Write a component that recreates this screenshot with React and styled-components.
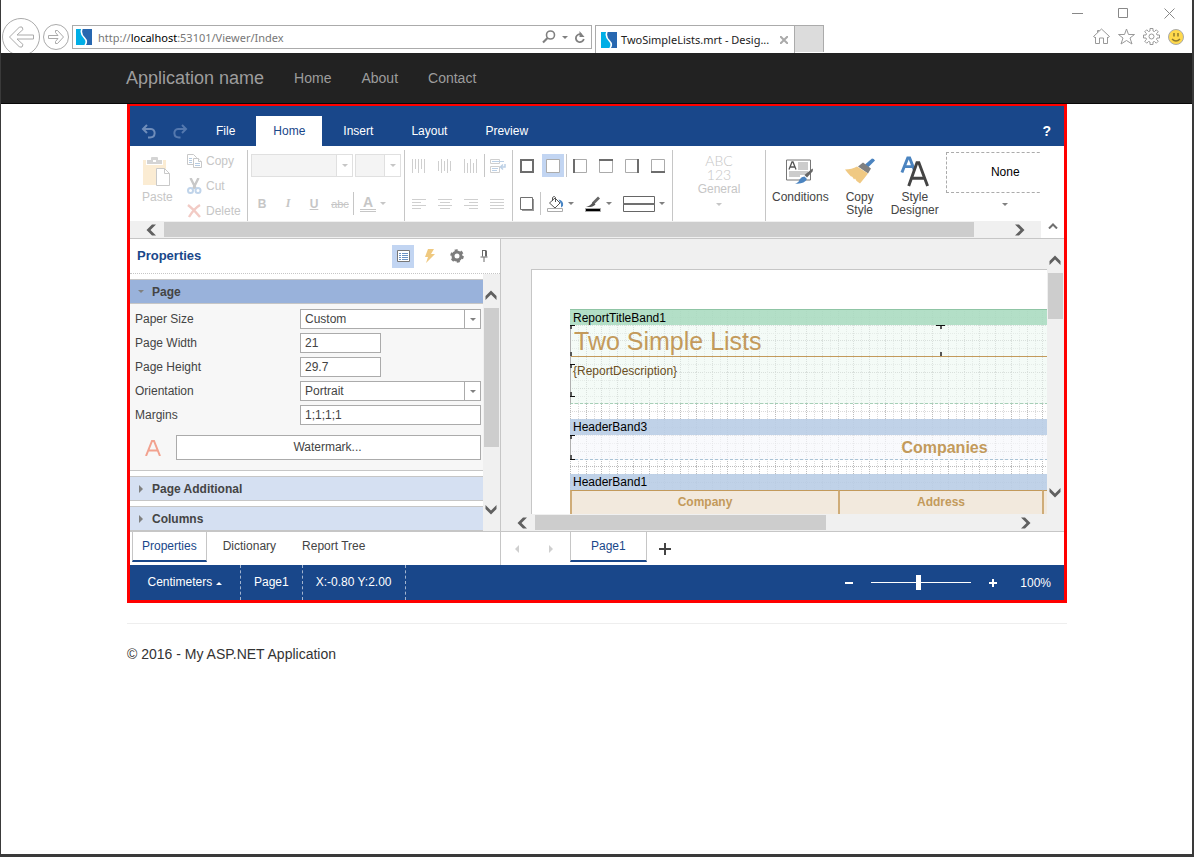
import React, {useState} from 'react';
import styled, {createGlobalStyle, css} from 'styled-components';

const colors = {
    blue: '#19478a',
    blue_selected: '#c2d5f2',
    blue_group: '#d5e0f2',
    blue_group_open: '#99b2db',
    text: '#444444',
    disabled: '#c6c6c6',
    border: '#c6c6c6',
    input_border: '#ababab',
    track: '#f0f0f0',
    thumb: '#cdcdcd',
    gold: '#c39a5b',
};

const GlobalStyle = createGlobalStyle`
    * {
        box-sizing: border-box;
    }

    body {
        margin: 0;
        background: #ffffff;
        font-family: "Liberation Sans", Arial, sans-serif;
        font-size: 12px;
        color: ${colors.text};
    }

    button, input, select {
        font: inherit;
        color: inherit;
    }
`

/* icons */

const Arrow = ({color = '#808080', dir = 'down'}) => {
    const paths = {
        down: 'M0 1h6L3 4z',
        up: 'M0 4h6L3 1z',
        right: 'M1 0v8l4-4z',
        left: 'M5 0v8L1 4z',
    };
    const tall = dir === 'right' || dir === 'left';
    return (
        <svg width="6" height={tall ? 8 : 5} viewBox={tall ? '0 0 6 8' : '0 0 6 5'} fill={color}>
            <path d={paths[dir]} />
        </svg>
    );
};

const Chevron = ({dir}) => {
    const turn = {left: 0, up: 90, right: 180, down: 270}[dir];
    return (
        <svg width="12" height="12" viewBox="0 0 12 12" fill="#606060">
            <path d="M7 0.5h4L5.5 6l5.5 5.5H7L1.5 6z" transform={`rotate(${turn} 6 6)`} />
        </svg>
    );
};

const Favicon = () => (
    <svg width="16" height="16" viewBox="0 0 16 16">
        <path fill="#00aee6" d="M0 0h16v16H0z" />
        <path fill="#2767b0" d="M6 0h10v16H9c2-2 2-4 0-6.500C6 7 5 3 6 0z" />
        <path fill="none" stroke="#fff" strokeWidth="1.600" d="M6 0C4 4 6 6.500 8.500 9s2 5 .5 7" />
    </svg>
);

const UndoIcon = () => (
    <svg width="15" height="15" viewBox="0 0 15 15" fill="none" stroke="#6f8dba" strokeWidth="2">
        <path d="M6 1L2 5l4 4M2.500 5H10c5 0 5 8.500-1 8.500H7" />
    </svg>
);

const RedoIcon = () => (
    <svg width="15" height="15" viewBox="0 0 15 15" fill="none" stroke="#5478ae" strokeWidth="2">
        <path d="M9 1l4 4-4 4M12.500 5H5C0 5 0 13.500 6 13.500h1.500" />
    </svg>
);

const PasteIcon = () => (
    <svg width="28" height="31" viewBox="0 0 28 31">
        <path fill="#fbecd3" d="M0 4h23v25H0z" />
        <path fill="#fff" d="M3 3h17v6H3z" />
        <path fill="#d4d4d4" d="M4 4h4V2q0-1 1-1h5q1 0 1 1v2h4v4H4z" />
        <path fill="#fff" d="M10 4h3v2h-3z" />
        <path fill="#fff" stroke="#c9c9c9" d="M13.500 12.500h8l5 5v12h-13z" />
        <path fill="none" stroke="#c9c9c9" d="M21.500 12.500v5h5" />
    </svg>
);

const CopyIcon = () => (
    <svg width="16" height="16" viewBox="0 0 16 16" fill="#fff" stroke="#c8c8c8">
        <path d="M.5 1.500h6l3 3v7h-9z" />
        <path stroke="#b5cbe2" d="M2 5.500h3M2 7.500h3M2 9.500h3" />
        <path d="M6.500 5.500h5l3 3v6h-8z" />
        <path d="M11.500 5.500v3h3" />
        <path stroke="#b5cbe2" d="M8 10.500h5M8 12.500h5" />
    </svg>
);

const CutIcon = () => (
    <svg width="16" height="16" viewBox="0 0 16 16" fill="none" strokeWidth="2">
        <path stroke="#c8c8c8" strokeWidth="2.400" d="M3.500 0l5.500 11M11.500 0L6 11" />
        <circle cx="3.500" cy="12.500" r="2.500" stroke="#c0d4ea" />
        <circle cx="11" cy="12.500" r="2.500" stroke="#c0d4ea" />
    </svg>
);

const DeleteIcon = () => (
    <svg width="16" height="16" viewBox="0 0 16 16" fill="none" stroke="#f2cbc5" strokeWidth="2.400">
        <path d="M1 2c4 3 8 7 12 12M13 2C8 5 5 9 2 14" />
    </svg>
);

const VAlignIcon = ({lines}) => (
    <svg width="14" height="14" viewBox="0 0 14 14" stroke="#cfcfcf">
        {lines.map(([y1, y2], i) => (
            <line key={i} x1={i * 3 + 0.5} x2={i * 3 + 0.5} y1={y1} y2={y2} />
        ))}
    </svg>
);

const HAlignIcon = ({lines}) => (
    <svg width="14" height="14" viewBox="0 0 14 14" stroke="#cfcfcf">
        {lines.map(([x1, x2], i) => (
            <line key={i} x1={x1} x2={x2} y1={i * 3 + 2.5} y2={i * 3 + 2.5} />
        ))}
    </svg>
);

const WrapIcon = () => (
    <svg width="16" height="16" viewBox="0 0 16 16" fill="none" stroke="#cfcfcf">
        <path d="M.5 1.500h9v4h-9zM.5 8.500h9v6h-9z" />
        <path stroke="#bcd0e6" d="M2 3.500h12M2 10.500h6M2 12.500h5" />
        <path stroke="#bcd0e6" strokeWidth="1.500" d="M15 6v3h-4.500M13 6.500L10.500 9l2.500 2.500" />
    </svg>
);

const BorderIcon = ({side}) => {
    const sides = {
        left: 'M1 0v14',
        top: 'M0 1h14',
        right: 'M13 0v14',
        bottom: 'M0 13h14',
        all: 'M1 1h12v12H1z',
    };
    return (
        <svg width="14" height="14" viewBox="0 0 14 14" fill="#fff">
            <path stroke="#ababab" d="M.5.5h13v13H.5z" />
            {sides[side] && <path fill="none" stroke="#6d6d6d" strokeWidth="2" d={sides[side]} />}
        </svg>
    );
};

const ShadowIcon = () => (
    <svg width="14" height="14" viewBox="0 0 14 14">
        <path fill="#999" d="M2 2h12v12H2z" />
        <path fill="#fff" stroke="#707070" d="M.5.5h12v12H.5z" />
    </svg>
);

const BucketIcon = () => (
    <svg width="17" height="16" viewBox="0 0 17 16" fill="none">
        <path fill="#fff" stroke="#555" d="M2.500 7l5.500-5 5 5-5 5z" />
        <path stroke="#555" d="M5.500 5V1.500Q7.500-.8 8.500 1.500V6" />
        <path fill="#4a86c5" d="M11.500 3.500q5.500 1 4.500 6.500l-2 1.500V8z" />
        <path fill="#fff" stroke="#ababab" d="M.5 12.500h15v3H.5z" />
    </svg>
);

const BrushIcon = () => (
    <svg width="17" height="16" viewBox="0 0 17 16">
        <path stroke="#666" strokeWidth="2.800" d="M14 1.500L8 7.500" />
        <path fill="#555" d="M8 6l2.500 2.500Q8 11.500 1 11q4.500-1 7-5z" />
        <path fill="#000" stroke="#ababab" d="M.5 12.500h15v3H.5z" />
    </svg>
);

const LineStyleIcon = () => (
    <svg width="32" height="16" viewBox="0 0 32 16">
        <path fill="#fff" stroke="#666" d="M.5.5h31v15H.5z" />
        <path fill="#707070" d="M0 7h32v2H0z" />
    </svg>
);

const ConditionsIcon = () => (
    <svg width="28" height="28" viewBox="0 0 28 28" fill="none">
        <path fill="#fff" stroke="#777" d="M.5 2.500h24v20H.5z" />
        <path stroke="#555" strokeWidth="1.300" d="M3 12l3-7.500h1L10 12M4.500 9.500h4" />
        <path stroke="#999" d="M12 5.500h10M12 7.500h10M12 9.500h10M12 11.500h10M3 14.500h19M3 16.500h19M3 18.500h11" />
        <path fill="#666" d="M26.500 11q1 1 0 3L21 20l-2.500-2.500z" />
        <path fill="#4b84c0" d="M18.500 19l2.500 2.500Q18 27 9 26q4-1 4.500-4 2-3 5-3z" />
    </svg>
);

const CopyStyleIcon = () => (
    <svg width="30" height="26" viewBox="0 0 30 26">
        <path fill="#4b84c0" d="M20 6l7-6q2 0 3 2l-7 7z" />
        <path fill="#808080" d="M18 4l8 6-3 5-10-7z" />
        <path fill="#f0c983" d="M0 11q7 0 12-3l11 7q-3 4-8 10-4-2-5-5l-1 1q-1-2-2-3l-1 0q-3-3-6-7z" />
    </svg>
);

const StyleDesignerIcon = () => (
    <svg width="30" height="32" viewBox="0 0 30 32" fill="none">
        <path stroke="#4b84c0" strokeWidth="3" d="M1.500 17L7.500 2h2l5 13M4 11h9" />
        <path stroke="#444" strokeWidth="3" d="M8.500 31L17 7h2l9 24M12 23h13" />
    </svg>
);

const PropsIcon = () => (
    <svg width="13" height="12" viewBox="0 0 13 12" fill="#fff">
        <path stroke="#777" d="M.5.5h12v11H.5z" />
        <path stroke="#6b93c4" d="M2 3.500h2M5 3.500h6M2 5.500h2M5 5.500h6M2 7.500h2M5 7.500h6M2 9.500h2M5 9.500h6" />
    </svg>
);

const EventsIcon = () => (
    <svg width="10" height="14" viewBox="0 0 10 14" fill="#efc980">
        <path d="M3 0h6L6 5h4L1 14l2-6H0z" />
    </svg>
);

const GearIcon = () => (
    <svg width="14" height="14" viewBox="0 0 14 14" fill="none">
        <circle cx="7" cy="7" r="4" stroke="#7d7d7d" strokeWidth="3" />
        <circle cx="7" cy="7" r="5.800" stroke="#7d7d7d" strokeWidth="2" strokeDasharray="3 3.070" />
    </svg>
);

const PinIcon = () => (
    <svg width="8" height="12" viewBox="0 0 8 12" fill="none" stroke="#6a6a6a">
        <path d="M2 .5h4M2.500.5v6M5.500.5v6M6.500.5v6M.5 7h7M4 7v5" />
    </svg>
);

const BackIcon = () => (
    <svg width="38" height="35" viewBox="0 0 38 35" fill="none" stroke="#aaa">
        <circle cx="19" cy="19" r="18.500" />
        <path d="M7.500 19l10-10h2.500l1 2.500-6 5.500h16.500v4H15l6 5.500-1 2.500h-2.500z" />
    </svg>
);

const ForwardIcon = () => (
    <svg width="26" height="26" viewBox="0 0 26 26" fill="none" stroke="#aaa">
        <circle cx="13" cy="13" r="12.500" />
        <path d="M20.500 13l-6 6.500h-2v-2l2.500-3H5.500v-3H15l-2.500-3v-2h2z" />
    </svg>
);

const SearchIcon = () => (
    <svg width="14" height="14" viewBox="0 0 14 14" fill="none" stroke="#808080" strokeWidth="1.600">
        <circle cx="8.500" cy="5" r="4" />
        <path strokeWidth="2.200" d="M5.500 8L1 12.500" />
    </svg>
);

const RefreshIcon = () => (
    <svg width="12" height="13" viewBox="0 0 12 13" fill="none" stroke="#808080" strokeWidth="1.800">
        <path d="M7.500 3.500A4 4 0 1 0 9.800 8" />
        <path fill="#808080" stroke="none" d="M5.500 0v6h5z" />
    </svg>
);

const HomeIcon = () => (
    <svg width="17" height="17" viewBox="0 0 17 17" fill="none" stroke="#999">
        <path d="M.5 8.500l8-7.500 8 7.500-1.500 1-.5-.5v6.500h-4V10h-4v5.500h-4V9l-.5.5zM4.500 4.500V2.500h2" />
    </svg>
);

const StarIcon = () => (
    <svg width="17" height="17" viewBox="0 0 17 17" fill="none" stroke="#999">
        <path d="M8.500 1l2 5.500h6L12 10l2 6-5.500-3.500L3 16l2-6L.5 6.500h6z" />
    </svg>
);

const ToolsIcon = () => (
    <svg width="17" height="17" viewBox="0 0 17 17" fill="none" stroke="#999">
        <path d="M7 .5h3v2.500l1.500.5 1.800-1.700 2 2L13.500 5.600 14 7h2.500v3H14l-.5 1.400 1.800 1.800-2 2-1.800-1.700-1.500.5v2.500H7V14l-1.500-.5-1.800 1.700-2-2 1.800-1.800L3 10H.5V7H3l.5-1.400L1.700 3.800l2-2L5.500 3.500 7 3z" />
        <circle cx="8.500" cy="8.500" r="2.500" />
    </svg>
);

const SmileIcon = () => (
    <svg width="16" height="16" viewBox="0 0 16 16" fill="none">
        <circle cx="8" cy="8" r="7.500" fill="#ffd94c" stroke="#aaa" />
        <path stroke="#8f7a2c" strokeWidth="1.500" d="M6 4v3.500M10 4v3.500M4 10q4 4 8 0" />
    </svg>
);

const WatermarkIcon = () => (
    <svg width="16" height="16" viewBox="0 0 16 16" fill="none" stroke="#f2a28f" strokeWidth="2">
        <path d="M1 16L7 1h2l6 15M3.500 10.500h9" />
    </svg>
);

const DesignGrid = () => {
    const steps = [0, 8, 16, 24, 31, 39, 47, 55];
    return (
        <GridSvg width="748" height="206">
            <defs>
                <pattern id="cells" width="63" height="63" patternUnits="userSpaceOnUse">
                    {steps.map((s, i) => (
                        <g key={s} stroke={i % 2 ? '#dadada' : '#bcbcbc'} strokeDasharray="1 1">
                            <line x1={s + 0.5} x2={s + 0.5} y1="0" y2="63" />
                            <line x1="0" x2="63" y1={s + 0.5} y2={s + 0.5} />
                        </g>
                    ))}
                </pattern>
            </defs>
            <rect width="748" height="206" fill="url(#cells)" />
        </GridSvg>
    );
};

/* corner marks of the components on the page */
const CornerMarks = () => (
    <GridSvg width="748" height="206" fill="none" stroke="#111">
        <path d="M0 16.500h5M366 16.500h9M0 55.500h5M0 87.500h5M0 126.500h5M0 150.500h5" />
        <path stroke="#555" strokeWidth="2" d="M1 17v3M1 43v4M371 17v3M371 43v4M1 56v3M1 83v4M1 127v3M1 146v4" />
    </GridSvg>
);

const Scroll = ({vertical, size}) => (
    <ScrollTrack $vertical={vertical}>
        <ScrollButton $vertical={vertical} aria-label={vertical ? 'Up' : 'Left'}>
            <Chevron dir={vertical ? 'up' : 'left'} />
        </ScrollButton>
        <ScrollRail $vertical={vertical}>
            <ScrollThumb $vertical={vertical} $size={size} />
        </ScrollRail>
        <ScrollButton $vertical={vertical} $end aria-label={vertical ? 'Down' : 'Right'}>
            <Chevron dir={vertical ? 'down' : 'right'} />
        </ScrollButton>
    </ScrollTrack>
);

const BrowserBar = () => (
    <Browser>
        <BackButton aria-label="Back"><BackIcon /></BackButton>
        <ForwardButton aria-label="Forward"><ForwardIcon /></ForwardButton>
        <AddressBox>
            <Favicon />
            <Address role="textbox" aria-label="Address" tabIndex={0}>
                http://<b>localhost</b>:53101/Viewer/Index
            </Address>
            <PlainButton aria-label="Search"><SearchIcon /></PlainButton>
            <PlainButton aria-label="Search options"><Arrow /></PlainButton>
            <PlainButton aria-label="Refresh"><RefreshIcon /></PlainButton>
        </AddressBox>
        <BrowserTab>
            <Favicon />
            <span>TwoSimpleLists.mrt - Desig...</span>
            <PlainButton aria-label="Close tab">
                <svg width="8" height="8" viewBox="0 0 8 8" stroke="#aaa" strokeWidth="2">
                    <path d="M0 0l8 8M8 0L0 8" />
                </svg>
            </PlainButton>
        </BrowserTab>
        <NewTab aria-label="New tab" />
        <WindowSide>
            <WindowButtons>
                <PlainButton aria-label="Minimize">
                    <svg width="11" height="11" stroke="#888"><path d="M0 5.500h11" /></svg>
                </PlainButton>
                <PlainButton aria-label="Maximize">
                    <svg width="11" height="11" stroke="#888" fill="none"><path d="M.5.5h9v9h-9z" /></svg>
                </PlainButton>
                <PlainButton aria-label="Close">
                    <svg width="11" height="11" stroke="#888"><path d="M.5.5l10 10M10.500.5l-10 10" /></svg>
                </PlainButton>
            </WindowButtons>
            <WindowTools>
                <PlainButton aria-label="Home page"><HomeIcon /></PlainButton>
                <PlainButton aria-label="Favorites"><StarIcon /></PlainButton>
                <PlainButton aria-label="Tools"><ToolsIcon /></PlainButton>
                <PlainButton aria-label="Feedback"><SmileIcon /></PlainButton>
            </WindowTools>
        </WindowSide>
    </Browser>
);

const RibbonBar = () => (
    <Ribbon>
        <RibbonMain>
            <RibbonGroups>
                <ClipboardGroup>
                    <BigButton disabled>
                        <PasteIcon />
                        Paste
                    </BigButton>
                    <ClipboardList>
                        <ClipboardButton disabled><CopyIcon />Copy</ClipboardButton>
                        <ClipboardButton disabled><CutIcon />Cut</ClipboardButton>
                        <ClipboardButton disabled><DeleteIcon />Delete</ClipboardButton>
                    </ClipboardList>
                </ClipboardGroup>
                <Group>
                    <ToolRow $gap={2}>
                        <FontBox $width={102}>
                            <select aria-label="Font" disabled />
                            <i><Arrow color={colors.disabled} /></i>
                        </FontBox>
                        <FontBox $width={46}>
                            <select aria-label="Font size" disabled />
                            <i><Arrow color={colors.disabled} /></i>
                        </FontBox>
                    </ToolRow>
                    <ToolRow>
                        <LetterButton disabled $bold>B</LetterButton>
                        <LetterButton disabled $italic>I</LetterButton>
                        <LetterButton disabled $underline>U</LetterButton>
                        <LetterButton disabled $small>abc</LetterButton>
                        <Separator />
                        <DropButton disabled>
                            <FontColor>A</FontColor>
                            <Arrow color={colors.disabled} />
                        </DropButton>
                    </ToolRow>
                </Group>
                <Group>
                    <ToolRow>
                        <ToolButton disabled aria-label="Align top">
                            <VAlignIcon lines={[[0, 14], [0, 10], [0, 14], [0, 10], [0, 14]]} />
                        </ToolButton>
                        <ToolButton disabled aria-label="Align middle">
                            <VAlignIcon lines={[[2, 12], [0, 14], [2, 12], [0, 14], [2, 12]]} />
                        </ToolButton>
                        <ToolButton disabled aria-label="Align bottom">
                            <VAlignIcon lines={[[0, 14], [4, 14], [0, 14], [4, 14], [0, 14]]} />
                        </ToolButton>
                        <Separator />
                        <ToolButton disabled aria-label="Word wrap"><WrapIcon /></ToolButton>
                    </ToolRow>
                    <ToolRow>
                        <ToolButton disabled aria-label="Align left">
                            <HAlignIcon lines={[[0, 14], [0, 9], [0, 14], [0, 9]]} />
                        </ToolButton>
                        <ToolButton disabled aria-label="Align center">
                            <HAlignIcon lines={[[0, 14], [2, 12], [0, 14], [2, 12]]} />
                        </ToolButton>
                        <ToolButton disabled aria-label="Align right">
                            <HAlignIcon lines={[[0, 14], [5, 14], [0, 14], [5, 14]]} />
                        </ToolButton>
                        <ToolButton disabled aria-label="Justify">
                            <HAlignIcon lines={[[0, 14], [0, 14], [0, 14], [0, 14]]} />
                        </ToolButton>
                    </ToolRow>
                </Group>
                <Group>
                    <ToolRow>
                        <ToolButton aria-label="All borders"><BorderIcon side="all" /></ToolButton>
                        <ToolButton $active aria-label="No borders"><BorderIcon /></ToolButton>
                        <Separator />
                        <ToolButton aria-label="Left border"><BorderIcon side="left" /></ToolButton>
                        <ToolButton aria-label="Top border"><BorderIcon side="top" /></ToolButton>
                        <ToolButton aria-label="Right border"><BorderIcon side="right" /></ToolButton>
                        <ToolButton aria-label="Bottom border"><BorderIcon side="bottom" /></ToolButton>
                    </ToolRow>
                    <ToolRow>
                        <ToolButton aria-label="Shadow"><ShadowIcon /></ToolButton>
                        <Separator />
                        <DropButton aria-label="Background"><BucketIcon /><Arrow /></DropButton>
                        <DropButton aria-label="Border color"><BrushIcon /><Arrow /></DropButton>
                        <DropButton aria-label="Border style"><LineStyleIcon /><Arrow /></DropButton>
                    </ToolRow>
                </Group>
                <FormatGroup>
                    <FormatButton disabled>
                        <FormatSample>ABC</FormatSample>
                        <FormatSample>123</FormatSample>
                        General
                        <Arrow color={colors.disabled} />
                    </FormatButton>
                </FormatGroup>
                <StyleGroup>
                    <BigButton><ConditionsIcon />Conditions</BigButton>
                    <BigButton><CopyStyleIcon />Copy<br />Style</BigButton>
                    <BigButton><StyleDesignerIcon />Style<br />Designer</BigButton>
                    <StyleChoice>
                        <span>None</span>
                        <Arrow />
                    </StyleChoice>
                </StyleGroup>
            </RibbonGroups>
            <Scroll size={97} />
        </RibbonMain>
        <CollapseButton aria-label="Collapse ribbon">
            <svg width="10" height="6" viewBox="0 0 10 6" fill="none" stroke="#707070" strokeWidth="2">
                <path d="M1 5.500l4-4 4 4" />
            </svg>
        </CollapseButton>
    </Ribbon>
);

const PropertiesPanel = () => (
    <Panel>
        <PanelHeader>
            <h2>Properties</h2>
            <ToolButton $active aria-label="Property list"><PropsIcon /></ToolButton>
            <ToolButton aria-label="Events"><EventsIcon /></ToolButton>
            <ToolButton aria-label="Settings"><GearIcon /></ToolButton>
            <ToolButton aria-label="Pin"><PinIcon /></ToolButton>
        </PanelHeader>
        <PanelBody>
            <PanelList>
                <GroupHeader $open><Arrow />Page</GroupHeader>
                <GroupBody>
                    <PropRow>
                        <label htmlFor="paper">Paper Size</label>
                        <SelectBox>
                            <select id="paper" defaultValue="Custom"><option>Custom</option></select>
                            <i><Arrow /></i>
                        </SelectBox>
                    </PropRow>
                    <PropRow>
                        <label htmlFor="width">Page Width</label>
                        <TextBox id="width" defaultValue="21" $short />
                    </PropRow>
                    <PropRow>
                        <label htmlFor="height">Page Height</label>
                        <TextBox id="height" defaultValue="29.7" $short />
                    </PropRow>
                    <PropRow>
                        <label htmlFor="orientation">Orientation</label>
                        <SelectBox>
                            <select id="orientation" defaultValue="Portrait"><option>Portrait</option></select>
                            <i><Arrow /></i>
                        </SelectBox>
                    </PropRow>
                    <PropRow>
                        <label htmlFor="margins">Margins</label>
                        <TextBox id="margins" defaultValue="1;1;1;1" />
                    </PropRow>
                    <WatermarkRow>
                        <WatermarkIcon />
                        <WatermarkButton>Watermark...</WatermarkButton>
                    </WatermarkRow>
                </GroupBody>
                <GroupHeader><Arrow dir="right" />Page Additional</GroupHeader>
                <GroupHeader><Arrow dir="right" />Columns</GroupHeader>
            </PanelList>
            <Scroll vertical size={77} />
        </PanelBody>
    </Panel>
);

const ReportCanvas = () => (
    <Canvas>
        <Viewport>
            <Paper>
                <Bands>
                    <DesignGrid />
                    <BandHeader $green>ReportTitleBand1</BandHeader>
                    <TitleBody>
                        <ReportTitle>Two Simple Lists</ReportTitle>
                        <ReportText>{'{ReportDescription}'}</ReportText>
                    </TitleBody>
                    <BandHeader>HeaderBand3</BandHeader>
                    <HeaderBody>Companies</HeaderBody>
                    <BandHeader>HeaderBand1</BandHeader>
                    <ReportTable>
                        <thead>
                            <tr>
                                <th>Company</th>
                                <th>Address</th>
                                <th />
                            </tr>
                        </thead>
                    </ReportTable>
                    <CornerMarks />
                </Bands>
            </Paper>
        </Viewport>
        <Scroll vertical size={23} />
        <Scroll size={62} />
    </Canvas>
);

export default function App() {
    const [tab, setTab] = useState('Home');
    const [panel, setPanel] = useState('Properties');
    const [zoom, setZoom] = useState(47);

    return (
        <Window>
            <GlobalStyle />
            <BrowserBar />
            <Navbar>
                <Container>
                    <Brand href="#">Application name</Brand>
                    <NavLink href="#">Home</NavLink>
                    <NavLink href="#">About</NavLink>
                    <NavLink href="#">Contact</NavLink>
                </Container>
            </Navbar>
            <Content>
                <Designer>
                    <TabStrip>
                        <PlainButton aria-label="Undo"><UndoIcon /></PlainButton>
                        <PlainButton aria-label="Redo"><RedoIcon /></PlainButton>
                        <Tabs>
                            {['File', 'Home', 'Insert', 'Layout', 'Preview'].map(name => (
                                <RibbonTab key={name} $active={tab === name} onClick={() => setTab(name)}>
                                    {name}
                                </RibbonTab>
                            ))}
                        </Tabs>
                        <HelpButton>?</HelpButton>
                    </TabStrip>
                    <RibbonBar />
                    <WorkArea>
                        <Side>
                            <PropertiesPanel />
                            <BottomTabs>
                                {['Properties', 'Dictionary', 'Report Tree'].map(name => (
                                    <BottomTab key={name} $active={panel === name} onClick={() => setPanel(name)}>
                                        {name}
                                    </BottomTab>
                                ))}
                            </BottomTabs>
                        </Side>
                        <Main>
                            <ReportCanvas />
                            <PageTabs>
                                <PlainButton aria-label="Previous page"><Arrow dir="left" color="#cfcfcf" /></PlainButton>
                                <PlainButton aria-label="Next page"><Arrow dir="right" color="#cfcfcf" /></PlainButton>
                                <PageTab $active>Page1</PageTab>
                                <PlainButton aria-label="Add page">
                                    <svg width="12" height="12" stroke="#444" strokeWidth="2"><path d="M0 6h12M6 0v12" /></svg>
                                </PlainButton>
                            </PageTabs>
                        </Main>
                    </WorkArea>
                    <StatusBar>
                        <UnitButton>Centimeters <Arrow dir="up" color="#fff" /></UnitButton>
                        <StatusCell>Page1</StatusCell>
                        <StatusCell>X:-0.80 Y:2.00</StatusCell>
                        <Zoom>
                            <PlainButton aria-label="Zoom out">
                                <svg width="8" height="8" fill="#fff"><path d="M0 3h8v2H0z" /></svg>
                            </PlainButton>
                            <ZoomSlider
                                type="range"
                                aria-label="Zoom"
                                value={zoom}
                                onChange={e => setZoom(e.target.value)}
                            />
                            <PlainButton aria-label="Zoom in">
                                <svg width="8" height="8" fill="#fff"><path d="M0 3h8v2H0zM3 0h2v8H3z" /></svg>
                            </PlainButton>
                            <ZoomValue>100%</ZoomValue>
                        </Zoom>
                    </StatusBar>
                </Designer>
                <Footer>© 2016 - My ASP.NET Application</Footer>
            </Content>
        </Window>
    );
}

/* window */

const Window = styled.div`
    min-height: 100vh;
    border: solid #3a3a3a;
    border-width: 0 2px 3px 1px;
    background: #fff;
`

const PlainButton = styled.button`
    display: flex;
    align-items: center;
    justify-content: center;
    padding: 0;
    border: none;
    outline: none;
    background: none;
`

const Browser = styled.div`
    display: flex;
    height: 53px;
    padding: 0 8px 0 1px;
    font-family: "Noto Sans", "Open Sans", sans-serif;
    font-size: 11px;
    color: #222;
`

const BackButton = styled(PlainButton)`
    align-items: flex-start;
    height: 35px;
    margin: 18px 3px 0 0;
`

const ForwardButton = styled(PlainButton)`
    height: 26px;
    margin: 24px 3px 0 0;
`

const AddressBox = styled.div`
    display: flex;
    flex: 1;
    align-items: center;
    max-width: 520px;
    height: 24px;
    margin: 25px 3px 0 0;
    padding: 0 5px 0 3px;
    gap: 6px;
    border: 1px solid #ababab;
`

const Address = styled.div`
    flex: 1;
    color: #777;
    white-space: nowrap;

    b {
        font-weight: normal;
        color: #000;
    }
`

const BrowserTab = styled.div`
    display: flex;
    align-items: center;
    width: 200px;
    height: 28px;
    margin-top: 25px;
    padding: 0 6px 0 5px;
    gap: 4px;
    border: 1px solid #ababab;
    border-bottom: none;

    span {
        flex: 1;
        white-space: nowrap;
    }
`

const NewTab = styled.button`
    width: 29px;
    height: 27px;
    margin-top: 25px;
    padding: 0;
    border: 1px solid #ababab;
    border-width: 1px 1px 0 0;
    background: #dcdcdc;
`

const WindowSide = styled.div`
    display: flex;
    flex-direction: column;
    align-items: flex-end;
    margin-left: auto;
    padding-top: 8px;
    gap: 9px;
`

const WindowButtons = styled.div`
    display: flex;
    gap: 35px;
    padding-right: 9px;
`

const WindowTools = styled.div`
    display: flex;
    gap: 8px;
`

const Navbar = styled.nav`
    background: #222;
    border-bottom: 1px solid #080808;
`

const Container = styled.div`
    display: flex;
    align-items: center;
    max-width: 971px;
    height: 50px;
    margin: 0 auto;
    padding: 0 15px;
`

const Brand = styled.a`
    margin-right: 15px;
    font-size: 18px;
    color: #9d9d9d;
    text-decoration: none;
`

const NavLink = styled.a`
    padding: 0 15px;
    font-size: 14px;
    color: #9d9d9d;
    text-decoration: none;
`

const Content = styled.main`
    max-width: 971px;
    margin: 0 auto;
    padding: 0 15px 0 16px;
`

const Footer = styled.footer`
    margin-top: 20px;
    padding-top: 20px;
    border-top: 1px solid #eee;
    font-size: 14px;
    line-height: 20px;
    color: #333;
`

/* designer */

const Designer = styled.section`
    border: 3px solid #ff0000;
    border-top-width: 2px;
`

const TabStrip = styled.div`
    display: flex;
    align-items: center;
    height: 40px;
    padding: 10px 13px 0 11px;
    gap: 17px;
    background: ${colors.blue};
`

const Tabs = styled.div`
    display: flex;
    flex: 1;
    height: 30px;
    gap: 4px;
    margin-left: -6px;
`

const RibbonTab = styled.button`
    padding: 0 17px;
    border: none;
    background: ${props => props.$active ? '#fff' : 'none'};
    color: ${props => props.$active ? colors.blue : '#fff'};
`

const HelpButton = styled(PlainButton)`
    font-size: 14px;
    font-weight: bold;
    color: #fff;
`

const Ribbon = styled.div`
    display: flex;
    border-bottom: 1px solid ${colors.border};
`

const RibbonMain = styled.div`
    flex: 1;
    min-width: 0;
`

const RibbonGroups = styled.div`
    display: flex;
    height: 75px;
    padding-top: 4px;
    overflow: hidden;
`

const Group = styled.div`
    display: flex;
    flex: none;
    flex-direction: column;
    justify-content: space-between;
    padding: 4px 3px 6px 3px;
    border-right: 1px solid ${colors.border};
`

const ClipboardGroup = styled(Group)`
    flex-direction: row;
    width: 118px;
    padding: 0 0 0 8px;
`

const ClipboardList = styled.div`
    display: flex;
    flex-direction: column;
    width: 60px;
    margin-top: -2px;
`

const ClipboardButton = styled.button`
    display: flex;
    flex: none;
    align-items: center;
    height: 25px;
    padding: 0;
    gap: 3px;
    border: none;
    background: none;
    color: ${colors.disabled};
`

const BigButton = styled.button`
    display: flex;
    flex: none;
    flex-direction: column;
    align-items: center;
    padding: 6px 4px 0;
    border: none;
    background: none;
    line-height: 13px;
    color: ${props => props.disabled ? colors.disabled : colors.text};

    svg {
        height: 31px;
        margin-bottom: 4px;
    }
`

const ToolRow = styled.div`
    display: flex;
    align-items: center;
    height: 23px;
    gap: ${props => props.$gap || 0}px;
`

const ToolButton = styled.button`
    display: flex;
    flex: none;
    align-items: center;
    justify-content: center;
    width: 22px;
    height: 23px;
    margin-right: 4px;
    padding: 0;
    border: none;
    background: ${props => props.$active ? colors.blue_selected : 'none'};

    &:last-child {
        margin-right: 0;
    }
`

const LetterButton = styled(ToolButton)`
    font-size: ${props => props.$small ? 11 : 12}px;
    font-weight: ${props => props.$bold || props.$underline || props.$italic ? 'bold' : 'normal'};
    font-family: ${props => props.$italic ? '"Liberation Serif", serif' : 'inherit'};
    font-style: ${props => props.$italic ? 'italic' : 'normal'};
    text-decoration: ${props => props.$underline ? 'underline' : props.$small ? 'line-through' : 'none'};
    color: ${colors.disabled};
`

const DropButton = styled.button`
    display: flex;
    flex: none;
    align-items: center;
    height: 23px;
    margin-right: 5px;
    padding: 0 2px 0 4px;
    gap: 4px;
    border: none;
    background: none;

    &:last-child {
        margin-right: 0;
    }
`

const FontColor = styled.span`
    width: 16px;
    border-bottom: 3px double ${colors.disabled};
    font-size: 14px;
    font-weight: bold;
    line-height: 13px;
    color: ${colors.disabled};
`

const Separator = styled.i`
    width: 1px;
    height: 23px;
    margin: 0 2px 0 -2px;
    background: ${colors.border};
`

const comboBox = css`
    display: flex;
    border: 1px solid ${colors.input_border};
    background: #fff;

    select {
        flex: 1;
        min-width: 0;
        padding: 0 0 0 4px;
        border: none;
        outline: none;
        appearance: none;
        background: none;
    }

    i {
        display: flex;
        align-items: center;
        justify-content: center;
        width: 16px;
        border-left: 1px solid ${colors.input_border};
    }
`

const FontBox = styled.div`
    ${comboBox}
    width: ${props => props.$width}px;
    height: 23px;
    border-color: #e0e0e0;

    select {
        background: #f0f0f0;
    }

    i {
        border-color: #e0e0e0;
    }
`

const FormatGroup = styled(Group)`
    width: 93px;
    padding: 0;
`

const FormatButton = styled.button`
    display: flex;
    flex-direction: column;
    align-items: center;
    padding: 4px 0 0;
    border: none;
    background: none;
    color: ${colors.disabled};

    svg {
        margin-top: 6px;
    }
`

const FormatSample = styled.span`
    font-family: Lato, sans-serif;
    font-size: 14px;
    font-weight: 300;
    line-height: 14px;
`

const StyleGroup = styled.div`
    display: flex;
    flex: none;
    padding-left: 2px;
    gap: 3px;

    ${BigButton} {
        min-width: 48px;
    }
`

const StyleChoice = styled.button`
    display: flex;
    flex-direction: column;
    align-items: center;
    width: 119px;
    margin-top: 2px;
    padding: 0;
    gap: 9px;
    border: none;
    background: none;
    color: #000;

    span {
        width: 100%;
        height: 41px;
        border: 1px dashed #ababab;
        line-height: 39px;
    }
`

const CollapseButton = styled(PlainButton)`
    align-items: flex-end;
    width: 23px;
    padding-bottom: 9px;
`

const ScrollTrack = styled.div`
    display: flex;
    flex: none;
    flex-direction: ${props => props.$vertical ? 'column' : 'row'};
    ${props => props.$vertical ? 'width' : 'height'}: 17px;
    background: ${colors.track};
`

const ScrollButton = styled(PlainButton)`
    flex: none;
    ${props => props.$vertical ? 'height' : 'width'}: ${props => props.$end ? 42 : 34}px;
    ${props => !props.$end && (props.$vertical ? 'padding-top: 8px;' : 'padding-left: 8px;')}
    ${props => props.$vertical && 'padding-right: 2px;'}
`

const ScrollRail = styled.div`
    display: flex;
    flex: 1;
    flex-direction: ${props => props.$vertical ? 'column' : 'row'};
    padding: ${props => props.$vertical ? '0 1px' : '1px 0'};
`

const ScrollThumb = styled.div`
    flex: 0 0 ${props => props.$size}%;
    background: ${colors.thumb};
`

/* work area */

const WorkArea = styled.div`
    display: flex;
    height: 326px;
`

const Side = styled.div`
    display: flex;
    flex: none;
    flex-direction: column;
    width: 371px;
    border-right: 1px solid ${colors.border};
`

const Main = styled.div`
    display: flex;
    flex: 1;
    flex-direction: column;
    min-width: 0;
`

const Panel = styled.div`
    display: flex;
    flex: 1;
    flex-direction: column;
    min-height: 0;
`

const PanelHeader = styled.div`
    display: flex;
    align-items: center;
    height: 35px;
    padding: 0 5px 0 7px;
    border-bottom: 1px dotted ${colors.border};

    h2 {
        flex: 1;
        margin: 0;
        font-size: 13px;
        line-height: 15px;
        padding-bottom: 2px;
        color: ${colors.blue};
    }

    ${ToolButton} {
        margin-right: 5px;

        &:last-child {
            margin-right: 0;
        }
    }
`

const PanelBody = styled.div`
    display: flex;
    flex: 1;
    min-height: 0;
`

const PanelList = styled.div`
    flex: 1;
    overflow: hidden;
`

const GroupHeader = styled.button`
    display: flex;
    align-items: center;
    width: 100%;
    height: 25px;
    margin-top: 5px;
    padding: 0 8px;
    gap: 8px;
    border: solid ${colors.border};
    border-width: 1px 0;
    background: ${props => props.$open ? colors.blue_group_open : colors.blue_group};
    font-weight: bold;
`

const GroupBody = styled.div`
    padding: 3px 2px 10px 5px;
    border-bottom: 1px solid ${colors.border};
    background: #f7f7f7;
`

const PropRow = styled.div`
    display: flex;
    align-items: center;
    height: 24px;

    label {
        flex: 1;
    }
`

const SelectBox = styled.div`
    ${comboBox}
    width: 181px;
    height: 20px;
`

const TextBox = styled.input`
    width: ${props => props.$short ? 81 : 181}px;
    height: 20px;
    margin-right: ${props => props.$short ? 100 : 0}px;
    padding: 0 4px;
    border: 1px solid ${colors.input_border};
    outline: none;
    background: #fff;
`

const WatermarkRow = styled.div`
    display: flex;
    align-items: center;
    height: 25px;
    margin-top: 8px;
    padding-left: 10px;
    gap: 15px;
`

const WatermarkButton = styled.button`
    flex: 1;
    height: 25px;
    padding: 0 2px 2px 0;
    border: 1px solid ${colors.input_border};
    background: #fff;
`

const BottomTabs = styled.div`
    display: flex;
    height: 34px;
    padding: 0 2px;
    gap: 6px;
    border-top: 1px solid ${colors.border};
`

const BottomTab = styled.button`
    height: 30px;
    padding: 0 9px;
    border: solid ${props => props.$active ? colors.border : 'transparent'};
    border-width: 0 1px 2px;
    border-bottom-color: ${props => props.$active ? colors.blue : 'transparent'};
    background: none;
    color: ${props => props.$active ? colors.blue : colors.text};
`

const PageTabs = styled.div`
    display: flex;
    height: 34px;
    padding-left: 13px;
    border-top: 1px solid ${colors.border};

    ${PlainButton} {
        margin-right: 28px;
    }

    button + ${PlainButton} {
        margin-right: 16px;
    }
`

const PageTab = styled(BottomTab)`
    margin-right: 12px;
    padding: 0 20px;
`

const StatusBar = styled.div`
    display: flex;
    height: 35px;
    background: ${colors.blue};
    color: #fff;
`

const UnitButton = styled.button`
    width: 111px;
    padding: 0 1px 2px 0;
    border: none;
    border-right: 1px dashed #a3b5d0;
    background: none;
`

const StatusCell = styled.div`
    padding: 0 13px;
    border-right: 1px dashed #a3b5d0;
    line-height: 34px;
`

const Zoom = styled.div`
    display: flex;
    align-items: center;
    margin-left: auto;
    padding-right: 13px;
    gap: 18px;
`

const ZoomSlider = styled.input`
    width: 100px;
    height: 17px;
    margin: 0;
    appearance: none;
    background: linear-gradient(#fff, #fff) center / 100% 1px no-repeat;

    &::-webkit-slider-thumb {
        appearance: none;
        width: 5px;
        height: 15px;
        background: #fff;
    }
`

const ZoomValue = styled.span`
    margin-left: 5px;
`

/* report page */

const Canvas = styled.div`
    display: grid;
    flex: 1;
    grid-template-columns: 1fr 17px;
    grid-template-rows: 1fr 17px;
    min-height: 0;
    background: ${colors.track};
`

const Viewport = styled.div`
    min-width: 0;
    padding: 30px 0 0 30px;
    overflow: hidden;
`

const Paper = styled.div`
    width: 828px;
    padding: 39px 0 0 38px;
    border: 1px solid ${colors.border};
    background: #fff;
`

const Bands = styled.div`
    position: relative;
    width: 748px;
    color: #000;
`

const GridSvg = styled.svg`
    position: absolute;
    top: 0;
    left: 0;
    pointer-events: none;
`

const BandHeader = styled.div`
    position: relative;
    height: 16px;
    padding-left: 3px;
    border-top: ${props => props.$green ? '1px solid #8fc5a5' : 'none'};
    background: ${props => props.$green ? 'rgba(172, 220, 194, 0.92)' : 'rgba(187, 206, 230, 0.92)'};
    line-height: 16px;
`

const TitleBody = styled.div`
    position: relative;
    height: 79px;
    margin-bottom: 15px;
    border-left: 1px solid #b0b0b0;
    border-bottom: 1px dashed #a5d0b7;
    background: rgba(237, 248, 241, 0.6);
`

const ReportTitle = styled.div`
    height: 32px;
    padding-left: 3px;
    border-bottom: 1px solid ${colors.gold};
    font-size: 25px;
    line-height: 32px;
    color: ${colors.gold};
`

const ReportText = styled.div`
    margin-top: 7px;
    padding-left: 2px;
    color: #6b4f22;
`

const HeaderBody = styled.div`
    position: relative;
    height: 25px;
    margin-bottom: 14px;
    border-left: 1px solid #b0b0b0;
    border-bottom: 1px dashed #a9c3d6;
    background: rgba(246, 248, 252, 0.7);
    font-size: 16px;
    font-weight: bold;
    line-height: 25px;
    text-align: center;
    color: ${colors.gold};
`

const ReportTable = styled.table`
    position: relative;
    width: 100%;
    table-layout: fixed;
    border-spacing: 0;
    background: #f2e9dd;
    color: ${colors.gold};

    th {
        height: 40px;
        padding: 4px 0 0;
        border-top: 1px solid ${colors.gold};
        border-left: 2px solid #cfac78;
        vertical-align: top;
    }

    th:first-child {
        width: 268px;
    }

    th:nth-child(2) {
        width: 204px;
    }
`
